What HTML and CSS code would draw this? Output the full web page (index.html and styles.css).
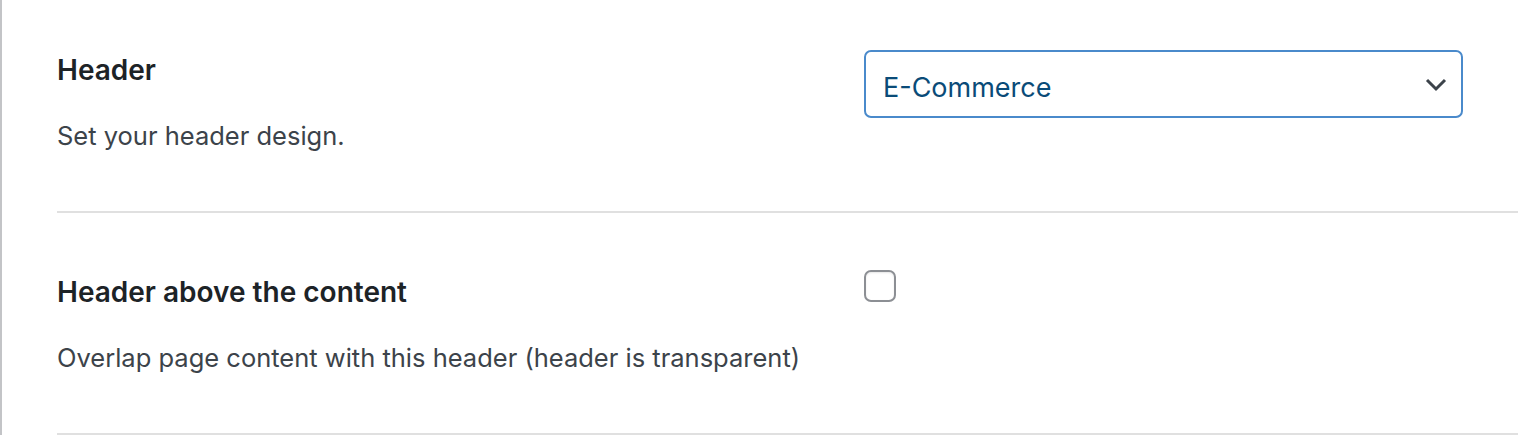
FILE: index.html
```html
<!DOCTYPE html>
<html lang="en">
<head>
<meta charset="utf-8">
<title>Header settings</title>
<link rel="stylesheet" href="styles.css">
</head>
<body>
<div class="panel">
  <div class="rows">
    <div class="row">
      <div class="label-col">
        <h3 class="title">Header</h3>
        <p class="desc">Set your header design.</p>
      </div>
      <div class="field-col">
        <div class="select-wrap">
          <select class="select">
            <option>E-Commerce</option>
            <option>Default</option>
          </select>
          <svg class="chevron" width="22" height="14" viewBox="0 0 22 14" aria-hidden="true">
            <path d="M2 2 L11 11 L20 2" fill="none" stroke="#3c434a" stroke-width="3"/>
          </svg>
        </div>
      </div>
    </div>
    <div class="row">
      <div class="label-col">
        <h3 class="title">Header above the content</h3>
        <p class="desc">Overlap page content with this header (header is transparent)</p>
      </div>
      <div class="field-col">
        <input type="checkbox" class="check">
      </div>
    </div>
  </div>
</div>
</body>
</html>
```

FILE: styles.css
```css
html, body {
  margin: 0;
  padding: 0;
  background: #ffffff;
}
body {
  font-family: Inter, "Noto Sans", "Liberation Sans", sans-serif;
  color: #1d2327;
  overflow: hidden;
}
.panel {
  border-left: 2px solid #c3c4c7;
  min-height: 444px;
  padding-left: 55px;
  box-sizing: border-box;
}
.rows {
  margin-top: -9px;
}
.row {
  display: grid;
  grid-template-columns: 807px 599px;
  padding: 61px 0 56px;
  border-bottom: 2px solid #e0e0e0;
}
.title {
  margin: 0;
  font-size: 28px;
  line-height: 36px;
  font-weight: 600;
  color: #1d2327;
}
.desc {
  margin: 29px 0 0;
  font-size: 25.5px;
  line-height: 38px;
  color: #3c434a;
}
.field-col {
  display: flex;
  align-items: flex-start;
}
.select-wrap {
  position: relative;
  width: 599px;
  margin-top: -2px;
}
.select {
  appearance: none;
  -webkit-appearance: none;
  width: 100%;
  height: 68px;
  box-sizing: border-box;
  border: 2px solid #4a8acb;
  border-radius: 7px;
  background: #ffffff;
  padding: 7px 60px 0 17px;
  font-family: Inter, "Noto Sans", "Liberation Sans", sans-serif;
  font-size: 27px;
  color: #0a4b78;
  outline: none;
}
.chevron {
  position: absolute;
  right: 16px;
  top: 28px;
  pointer-events: none;
}
.check {
  appearance: none;
  -webkit-appearance: none;
  margin: -4px 0 0;
  width: 32px;
  height: 32px;
  box-sizing: border-box;
  border: 2px solid #8c8f94;
  border-radius: 7px;
  background: #ffffff;
  box-shadow: inset 0 1px 2px rgba(0, 0, 0, 0.1);
}
```
